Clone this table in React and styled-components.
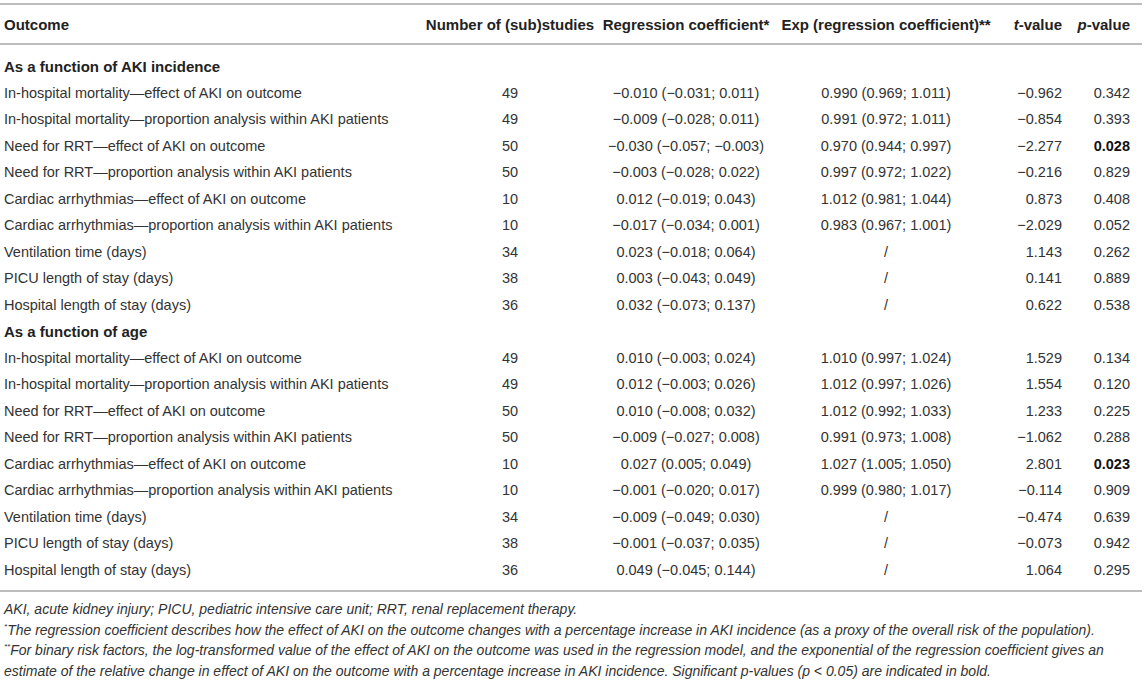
import React from 'react'
import styled, { createGlobalStyle } from 'styled-components'

const M = '\u2212';

const sections = [
    {
        title: 'As a function of AKI incidence',
        rows: [
            ['In-hospital mortality—effect of AKI on outcome', '49', `${M}0.010 (${M}0.031; 0.011)`, '0.990 (0.969; 1.011)', `${M}0.962`, '0.342'],
            ['In-hospital mortality—proportion analysis within AKI patients', '49', `${M}0.009 (${M}0.028; 0.011)`, '0.991 (0.972; 1.011)', `${M}0.854`, '0.393'],
            ['Need for RRT—effect of AKI on outcome', '50', `${M}0.030 (${M}0.057; ${M}0.003)`, '0.970 (0.944; 0.997)', `${M}2.277`, '0.028', true],
            ['Need for RRT—proportion analysis within AKI patients', '50', `${M}0.003 (${M}0.028; 0.022)`, '0.997 (0.972; 1.022)', `${M}0.216`, '0.829'],
            ['Cardiac arrhythmias—effect of AKI on outcome', '10', `0.012 (${M}0.019; 0.043)`, '1.012 (0.981; 1.044)', '0.873', '0.408'],
            ['Cardiac arrhythmias—proportion analysis within AKI patients', '10', `${M}0.017 (${M}0.034; 0.001)`, '0.983 (0.967; 1.001)', `${M}2.029`, '0.052'],
            ['Ventilation time (days)', '34', `0.023 (${M}0.018; 0.064)`, '/', '1.143', '0.262'],
            ['PICU length of stay (days)', '38', `0.003 (${M}0.043; 0.049)`, '/', '0.141', '0.889'],
            ['Hospital length of stay (days)', '36', `0.032 (${M}0.073; 0.137)`, '/', '0.622', '0.538'],
        ],
    },
    {
        title: 'As a function of age',
        rows: [
            ['In-hospital mortality—effect of AKI on outcome', '49', `0.010 (${M}0.003; 0.024)`, '1.010 (0.997; 1.024)', '1.529', '0.134'],
            ['In-hospital mortality—proportion analysis within AKI patients', '49', `0.012 (${M}0.003; 0.026)`, '1.012 (0.997; 1.026)', '1.554', '0.120'],
            ['Need for RRT—effect of AKI on outcome', '50', `0.010 (${M}0.008; 0.032)`, '1.012 (0.992; 1.033)', '1.233', '0.225'],
            ['Need for RRT—proportion analysis within AKI patients', '50', `${M}0.009 (${M}0.027; 0.008)`, '0.991 (0.973; 1.008)', `${M}1.062`, '0.288'],
            ['Cardiac arrhythmias—effect of AKI on outcome', '10', '0.027 (0.005; 0.049)', '1.027 (1.005; 1.050)', '2.801', '0.023', true],
            ['Cardiac arrhythmias—proportion analysis within AKI patients', '10', `${M}0.001 (${M}0.020; 0.017)`, '0.999 (0.980; 1.017)', `${M}0.114`, '0.909'],
            ['Ventilation time (days)', '34', `${M}0.009 (${M}0.049; 0.030)`, '/', `${M}0.474`, '0.639'],
            ['PICU length of stay (days)', '38', `${M}0.001 (${M}0.037; 0.035)`, '/', `${M}0.073`, '0.942'],
            ['Hospital length of stay (days)', '36', `0.049 (${M}0.045; 0.144)`, '/', '1.064', '0.295'],
        ],
    },
];

const App = () => {
    return (
        <Page>
            <GlobalStyle />
            <Table>
                <colgroup>
                    <col style={{ width: 420 }} />
                    <col style={{ width: 180 }} />
                    <col style={{ width: 172 }} />
                    <col style={{ width: 228 }} />
                    <col style={{ width: 66 }} />
                    <col style={{ width: 76 }} />
                </colgroup>
                <thead>
                    <tr>
                        <Th>Outcome</Th>
                        <Th $align="center">Number of (sub)studies</Th>
                        <Th $align="center">Regression coefficient*</Th>
                        <Th $align="center">Exp (regression coefficient)**</Th>
                        <Th $align="right" $pad={4}><i>t</i>-value</Th>
                        <Th $align="right" $pad={12}><i>p</i>-value</Th>
                    </tr>
                </thead>
                <tbody>
                    {sections.map((section, si) => (
                        <React.Fragment key={si}>
                            <tr>
                                <SectionCell colSpan={6} $first={si === 0}>{section.title}</SectionCell>
                            </tr>
                            {section.rows.map((row, ri) => {
                                const last = si === sections.length - 1 && ri === section.rows.length - 1;
                                return (
                                    <tr key={ri}>
                                        <Td $last={last}>{row[0]}</Td>
                                        <Td $last={last} $align="center">{row[1]}</Td>
                                        <Td $last={last} $align="center">{row[2]}</Td>
                                        <Td $last={last} $align="center">{row[3]}</Td>
                                        <Td $last={last} $align="right" $pad={4}>{row[4]}</Td>
                                        <Td $last={last} $align="right" $pad={12} $bold={row[6]}>{row[5]}</Td>
                                    </tr>
                                )
                            })}
                        </React.Fragment>
                    ))}
                </tbody>
            </Table>
            <Notes>
                <p>AKI, acute kidney injury; PICU, pediatric intensive care unit; RRT, renal replacement therapy.</p>
                <p><Mark>*</Mark>The regression coefficient describes how the effect of AKI on the outcome changes with a percentage increase in AKI incidence (as a proxy of the overall risk of the population).</p>
                <p><Mark>**</Mark>For binary risk factors, the log-transformed value of the effect of AKI on the outcome was used in the regression model, and the exponential of the regression coefficient gives an estimate of the relative change in effect of AKI on the outcome with a percentage increase in AKI incidence. Significant p-values (p &lt; 0.05) are indicated in bold.</p>
            </Notes>
        </Page>
    )
}

const GlobalStyle = createGlobalStyle`
    body {
        margin: 0;
        background: #fff;
        font-family: "Liberation Sans", Arial, sans-serif;
        color: #333;
    }
`;

const Page = styled.div`
    width: 1142px;
    padding-top: 3px;
`;

const Table = styled.table`
    width: 1142px;
    table-layout: fixed;
    border-collapse: collapse;
    font-size: 14.5px;
    border-top: 2px solid #bdbdbd;
    border-bottom: 2px solid #bdbdbd;
`;

const Th = styled.th`
    height: 38px;
    padding: 0 ${p => p.$pad || 0}px 0 ${p => p.$align ? 0 : 4}px;
    text-align: ${p => p.$align || 'left'};
    font-size: 15px;
    font-weight: bold;
    color: #222;
    white-space: nowrap;
    border-bottom: 2px solid #bdbdbd;
`;

const SectionCell = styled.td`
    height: 26.5px;
    padding: ${p => p.$first ? '8px' : '0'} 0 0 4px;
    font-weight: bold;
    font-size: 15px;
    color: #222;
`;

const Td = styled.td`
    height: 26.5px;
    padding: 0 ${p => p.$pad || 0}px ${p => p.$last ? '7px' : '0'} ${p => p.$align ? 0 : 4}px;
    text-align: ${p => p.$align || 'left'};
    font-weight: ${p => p.$bold ? 'bold' : 'normal'};
    color: ${p => p.$bold ? '#111' : '#333'};
    white-space: nowrap;
`;

const Notes = styled.div`
    padding: 7px 4px 0;
    font-size: 14px;
    font-style: italic;
    line-height: 20.5px;
    color: #333;

    p {
        margin: 0;
    }
`;

const Mark = styled.span`
    display: inline-block;
    font-size: 8px;
    line-height: 8px;
    vertical-align: top;
    margin-top: 3px;
`;

export default App
